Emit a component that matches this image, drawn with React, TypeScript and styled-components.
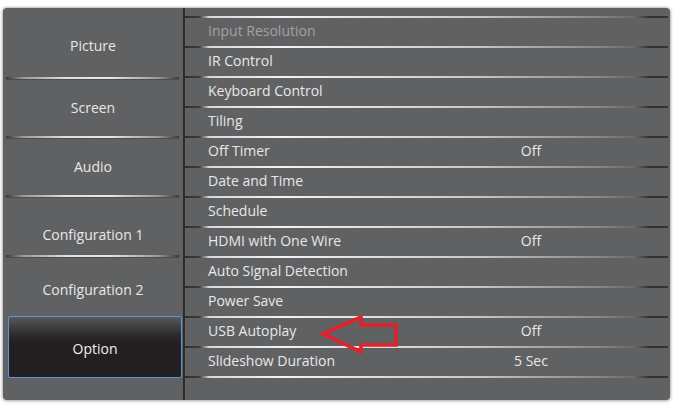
import React from "react";
import styled, { createGlobalStyle } from "styled-components";

const Global = createGlobalStyle`
  html, body { margin: 0; padding: 0; background: #ffffff; }
  body { width: 677px; height: 408px; overflow: hidden; font-family: "Open Sans", Lato, sans-serif; }
`;

const Page = styled.div`
  width: 677px;
  height: 408px;
  padding: 8px 7px 8px 3px;
  box-sizing: border-box;
`;

const Panel = styled.div`
  height: 392px;
  background: #606163;
  border-radius: 4px;
  box-shadow: 0 0 2px 1px rgba(150, 150, 150, 0.55), 0 1px 4px rgba(0, 0, 0, 0.2);
  display: grid;
  grid-template-columns: 180px 2px 1fr;
  overflow: hidden;
`;

const LeftColumn = styled.div`
  display: flex;
  flex-direction: column;
  padding-top: 8px;
`;

const VDivider = styled.div`
  background: #2a2a2b;
  box-shadow: 1px 0 0 rgba(255, 255, 255, 0.06);
`;

const LeftItem = styled.div<{ $h: number; $center: number }>`
  height: ${(p) => p.$h}px;
  box-sizing: border-box;
  padding-top: ${(p) => p.$center - 10}px;
  text-align: center;
  font-size: 14px;
  line-height: 20px;
  color: #e8e8e8;
`;

const LeftSep = styled.div`
  height: 2px;
  margin: 0 4px 0 3px;
  background: linear-gradient(
    to right,
    #3a3a3a 0%,
    #9a9a9a 10%,
    #e0e0e0 35%,
    #e6e6e6 60%,
    #9a9a9a 88%,
    #3a3a3a 100%
  );
  box-shadow: 0 1px 0 rgba(40, 40, 40, 0.35);
`;

const SelectedItem = styled.div`
  height: 62px;
  margin: 1px 1px 0 5px;
  box-sizing: border-box;
  border: 1.5px solid #5b95d6;
  border-radius: 2px;
  background: linear-gradient(to bottom, #58585a 0%, #2c2a2b 30%, #231f20 45%, #231f20 100%);
  color: #f0f0f0;
  font-size: 14px;
  line-height: 20px;
  text-align: center;
  padding-top: 22px;
`;

const RightColumn = styled.div`
  display: flex;
  flex-direction: column;
  padding-top: 8px;
`;

const RowSep = styled.div`
  height: 2px;
  margin-right: 2px;
  background: linear-gradient(
    to right,
    #2e2e2e 0%,
    #3e3e3e 3%,
    #d8d8d8 5%,
    #f2f2f2 20%,
    #c8c8c8 60%,
    #8a8a8a 85%,
    #6a6a6a 93%,
    #333333 96%,
    #333333 100%
  );
`;

const Row = styled.div`
  position: relative;
  height: 28px;
  display: grid;
  grid-template-columns: 267px 112px 1fr;
  align-items: center;
  padding-left: 23px;
  padding-bottom: 2px;
  box-sizing: border-box;
  font-size: 14px;
  color: #e8e8e8;
`;

const Label = styled.span<{ $disabled?: boolean }>`
  color: ${(p) => (p.$disabled ? "#a2a2a4" : "#e8e8e8")};
  line-height: 20px;
  white-space: nowrap;
`;

const Value = styled.span`
  text-align: center;
  line-height: 20px;
`;

const Arrow = styled.svg`
  position: absolute;
  left: 134px;
  top: -3px;
`;

const leftItems = [
  { label: "Picture", h: 61, c: 30 },
  { label: "Screen", h: 57, c: 29 },
  { label: "Audio", h: 57, c: 29 },
  { label: "Configuration 1", h: 58, c: 38 },
  { label: "Configuration 2", h: 58, c: 33 },
];

const rows: { label: string; value?: string; disabled?: boolean; arrow?: boolean }[] = [
  { label: "Input Resolution", disabled: true },
  { label: "IR Control" },
  { label: "Keyboard Control" },
  { label: "Tiling" },
  { label: "Off Timer", value: "Off" },
  { label: "Date and Time" },
  { label: "Schedule" },
  { label: "HDMI with One Wire", value: "Off" },
  { label: "Auto Signal Detection" },
  { label: "Power Save" },
  { label: "USB Autoplay", value: "Off", arrow: true },
  { label: "Slideshow Duration", value: "5 Sec" },
];

export default function App() {
  return (
    <>
      <Global />
      <Page>
        <Panel>
          <LeftColumn>
            {leftItems.map((it, i) => (
              <React.Fragment key={it.label}>
                <LeftItem $h={it.h} $center={it.c}>
                  {it.label}
                </LeftItem>
                {i < leftItems.length - 1 && <LeftSep />}
              </React.Fragment>
            ))}
            <SelectedItem>Option</SelectedItem>
          </LeftColumn>
          <VDivider />
          <RightColumn>
            {rows.map((r) => (
              <React.Fragment key={r.label}>
                <RowSep />
                <Row>
                  <Label $disabled={r.disabled}>{r.label}</Label>
                  <Value>{r.value ?? ""}</Value>
                  <span />
                  {r.arrow && (
                    <Arrow width="80" height="42" viewBox="0 0 80 42">
                      <path
                        d="M4 19 L42 2 L42 10 L77 10 L77 30 L42 30 L42 37 Z"
                        fill="none"
                        stroke="#e4202a"
                        strokeWidth="3.6"
                        strokeLinejoin="miter"
                      />
                    </Arrow>
                  )}
                </Row>
              </React.Fragment>
            ))}
            <RowSep />
          </RightColumn>
        </Panel>
      </Page>
    </>
  );
}
